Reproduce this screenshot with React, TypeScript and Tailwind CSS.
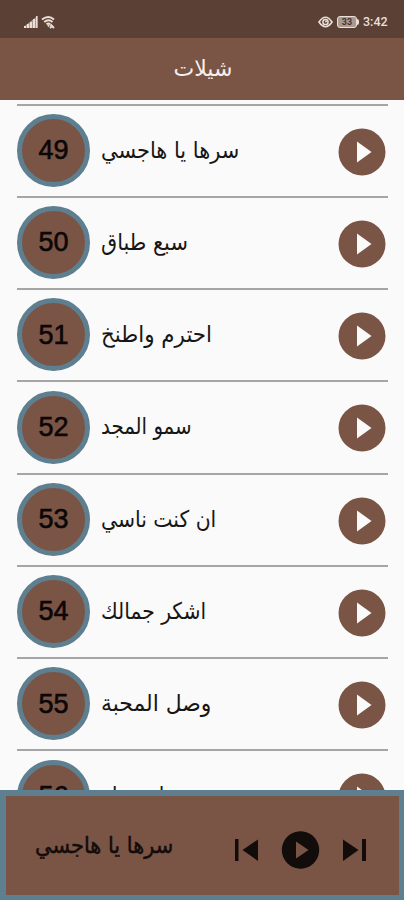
const tracks = [
  { n: 49, title: "سرها يا هاجسي", fit: "scale-x-[0.908]" },
  { n: 50, title: "سبع طباق", fit: "scale-x-[0.906]" },
  { n: 51, title: "احترم واطنخ", fit: "scale-x-[0.930]" },
  { n: 52, title: "سمو المجد", fit: "scale-x-[0.860]" },
  { n: 53, title: "ان كنت ناسي", fit: "scale-x-[0.885]" },
  { n: 54, title: "اشكر جمالك", fit: "scale-x-[0.882]" },
  { n: 55, title: "وصل المحبة", fit: "scale-x-[0.950]" },
  { n: 56, title: "احترمك", fit: "scale-x-[0.880]" },
];

function StatusBar() {
  return (
    <div className="flex h-[38px] shrink-0 items-center justify-between bg-[#5b4035] pr-[16px] pl-6 pt-[6px] text-[#eadfd9]">
      <div className="flex items-center gap-[3px]">
        <svg width="14" height="12" viewBox="0 0 14 12" fill="currentColor">
          <path d="M0 12V10.500L13.500 0V12Z" opacity="0.55" />
          <path d="M0 12V10H2V12ZM3 12V8H5V12ZM6 12V6H8V12ZM9 12V3H11V12ZM12 12V0H13.5V12Z" />
        </svg>
        <svg width="15" height="13" viewBox="0 0 15 13" fill="none" stroke="currentColor" strokeWidth="1.9">
          <path d="M1 3.500Q7.500-1.500 13 3.500M3.200 6Q7.500 2.500 11.500 6M5.500 8.300Q7.500 6.500 9.300 8.300M7 9L8 10.500M9.500 8.500L13 12M9 12L10.500 10.500" />
        </svg>
      </div>
      <div className="flex items-center">
        <svg width="15" height="12" viewBox="0 0 15 12" fill="none" stroke="currentColor">
          <path d="M1 6Q7.500-3.500 14 6Q7.500 15.500 1 6Z" strokeWidth="1.700" />
          <circle cx="7.500" cy="6" r="2.600" strokeWidth="1.500" />
          <circle cx="8" cy="5.500" r="1" fill="currentColor" stroke="none" />
        </svg>
        <div className="ml-1 flex h-3 w-[20px] items-center justify-center rounded-[3px] border-[1.5px] border-[#eadfd9] bg-[#a89a92] font-['Roboto',sans-serif] text-[9px] font-bold leading-none text-[#4b342b]">
          33
        </div>
        <div className="h-[6px] w-[2px] rounded-r bg-[#eadfd9]" />
        <span className="ml-1 w-[25px] whitespace-nowrap font-['Roboto',sans-serif] text-[12.500px] font-medium leading-none">3:42</span>
      </div>
    </div>
  );
}

function Track({ n, title, fit }: { n: number; title: string; fit: string }) {
  return (
    <li className="flex h-[92.250px] shrink-0 items-start border-t-2 border-[#a5a5a5]">
      <div className="mt-[8.300px] flex size-[73px] shrink-0 items-center justify-center rounded-full border-[5px] border-[#5d7f90] bg-[#7a5546] font-['Liberation_Sans',sans-serif] text-[27px] text-[#0b0706] [-webkit-text-stroke:0.600px_#0b0706]">
        {n}
      </div>
      <div dir="rtl" className={`mt-[27px] ml-[11px] origin-left whitespace-nowrap font-['DejaVu_Sans',sans-serif] text-[23px] leading-[34px] text-[#161616] ${fit}`}>
        {title}
      </div>
      <svg className="mt-[22px] mr-[2px] ml-auto shrink-0" width="48" height="48" viewBox="0 0 48 48">
        <circle cx="24" cy="24" r="23.500" fill="#7a5546" />
        <path d="M19 13.500V34.500L33.500 24Z" fill="#fafafa" />
      </svg>
    </li>
  );
}

export default function App() {
  return (
    <div className="flex h-[900px] w-[404px] flex-col overflow-hidden bg-[#fafafa]">
      <StatusBar />
      <header className="flex h-[62px] shrink-0 items-center justify-center bg-[#7a5546] pl-[2px]">
        <h1 dir="rtl" className="font-['DejaVu_Sans',sans-serif] text-[22px] leading-none text-[#f8efeb]">شيلات</h1>
      </header>
      <ul className="mr-4 ml-[17px] flex min-h-0 flex-1 flex-col overflow-hidden pt-[3.600px]">
        {tracks.map((t) => (
          <Track key={t.n} {...t} />
        ))}
      </ul>
      <footer className="flex h-[110px] shrink-0 items-center border-[6px] border-r-[5px] border-b-[5px] border-[#5d7f90] bg-[#7a5546] pl-[29px] text-[#120c0a]">
        <div dir="rtl" className="mb-[2px] origin-left scale-x-[0.908] whitespace-nowrap font-['DejaVu_Sans',sans-serif] text-[23px] leading-[34px] [-webkit-text-stroke:0.500px_#120c0a]">سرها يا هاجسي</div>
        <svg className="mt-[9px] mr-[32px] ml-auto shrink-0" width="132" height="40" viewBox="0 0 132 40" fill="currentColor">
          <path d="M0 9H3.500V31H0ZM23 9.500V31L7.500 20Z" />
          <path fillRule="evenodd" d="M65.500 1.300a18.700 18.700 0 1 0 0.010 0ZM61 11.500V28.500L73.500 20Z" />
          <path d="M108 9.500V31L123.500 20ZM127 9H131V31H127Z" />
        </svg>
      </footer>
    </div>
  );
}
